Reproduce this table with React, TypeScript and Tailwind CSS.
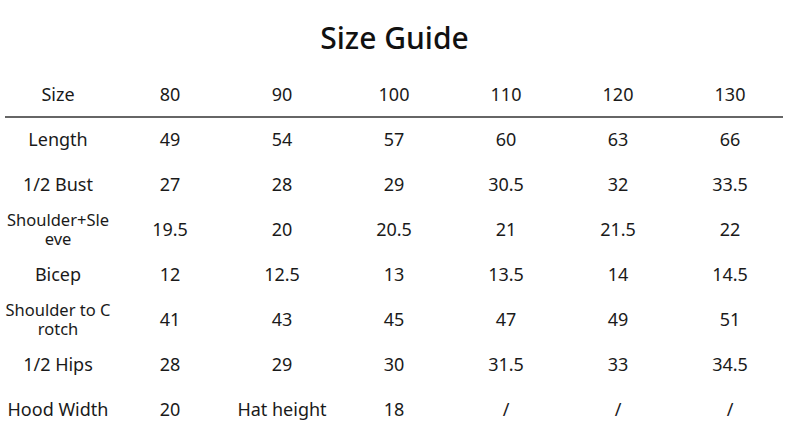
import React from "react";

const header = ["Size", "80", "90", "100", "110", "120", "130"];
const rows: string[][] = [
  ["Length", "49", "54", "57", "60", "63", "66"],
  ["1/2 Bust", "27", "28", "29", "30.5", "32", "33.5"],
  ["Shoulder+Sle eve", "19.5", "20", "20.5", "21", "21.5", "22"],
  ["Bicep", "12", "12.5", "13", "13.5", "14", "14.5"],
  ["Shoulder to C rotch", "41", "43", "45", "47", "49", "51"],
  ["1/2 Hips", "28", "29", "30", "31.5", "33", "34.5"],
  ["Hood Width", "20", "Hat height", "18", "/", "/", "/"],
];

const small = new Set(["Shoulder+Sle eve", "Shoulder to C rotch"]);

export default function App() {
  return (
    <div
      className="w-[789px] h-[445px] bg-white text-[#1a1a1a] overflow-hidden"
      style={{ fontFamily: '"Noto Sans", "Open Sans", sans-serif' }}
    >
      <div className="pt-[18px] pb-[15px] text-center text-[30px] leading-[40px] font-medium text-[#111]">
        Size Guide
      </div>
      <div className="ml-[2px] grid grid-cols-[repeat(7,112px)] h-[43px] items-center text-[18px]">
        {header.map((h) => (
          <div key={h} className="text-center">
            {h}
          </div>
        ))}
      </div>
      <div className="ml-[5px] w-[778px] h-[2px] bg-[#666]" />
      {rows.map((r, i) => (
        <div
          key={i}
          className="ml-[2px] grid grid-cols-[repeat(7,112px)] h-[45px] pb-[3px] items-center text-[18px]"
        >
          {r.map((c, j) => (
            <div
              key={j}
              className={
                j === 0 && small.has(c)
                  ? "text-center text-[16.5px] leading-[19px] whitespace-nowrap"
                  : "text-center"
              }
            >
              {j === 0 && small.has(c)
                ? c === "Shoulder+Sle eve"
                  ? (
                    <>
                      Shoulder+Sle
                      <br />
                      eve
                    </>
                  )
                  : (
                    <>
                      Shoulder to C
                      <br />
                      rotch
                    </>
                  )
                : c}
            </div>
          ))}
        </div>
      ))}
    </div>
  );
}
